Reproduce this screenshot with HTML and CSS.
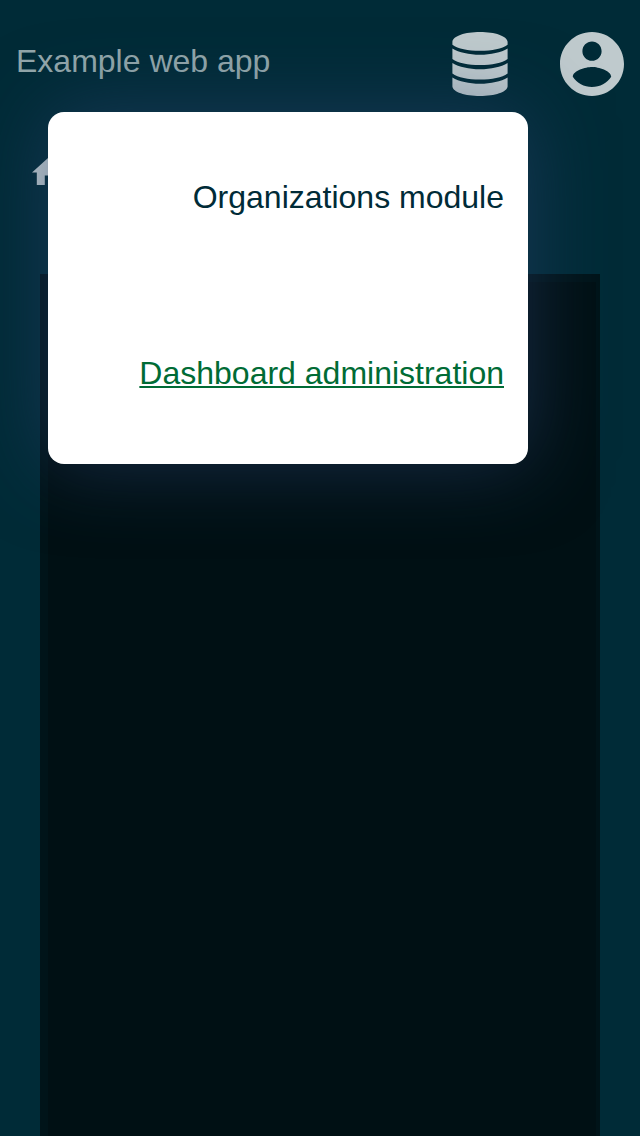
FILE: index.html
```html
<!DOCTYPE html>
<html lang="en">
<head>
<meta charset="utf-8">
<title>Example web app</title>
<link rel="stylesheet" href="styles.css">
</head>
<body>
<header class="bar">
  <span class="title">Example web app</span>
  <nav class="actions">
    <svg class="db" viewBox="0 0 56 64"><path d="M.4 9.700C1 4 13 0 28 0s27 4 27.600 9.700v3C50 16.800 40 18.800 28 18.800S6 16.800 .4 12.700zM.4 16.400C7 20.300 17 22.700 28 22.700s21-2.400 27.600-6.300v10.500C50 31 40 33 28 33S6 31 .4 26.900zM.4 30.900C7 34.800 17 37.200 28 37.200s21-2.400 27.600-6.300v10.500C50 45.500 40 47.500 28 47.500S6 45.500 .4 41.400zM.4 45.400C7 49.300 17 51.700 28 51.700s21-2.400 27.600-6.300v9.100C55 60 43 64 28 64S1 60 .4 54.500z"/></svg>
    <svg class="user" viewBox="2 2 20 20"><path d="M12 2C6.480 2 2 6.480 2 12s4.480 10 10 10 10-4.480 10-10S17.520 2 12 2zm0 3c1.660 0 3 1.340 3 3s-1.340 3-3 3-3-1.340-3-3 1.340-3 3-3zm0 14.200c-2.500 0-4.710-1.280-6-3.220.030-1.990 4-3.080 6-3.080 1.990 0 5.970 1.090 6 3.080-1.290 1.940-3.500 3.220-6 3.220z"/></svg>
  </nav>
</header>
<div class="crumbs">
  <svg class="home" viewBox="2 3 20 17"><path d="M10 20v-6h4v6h5v-8h3L12 3 2 12h3v8z"/></svg>
</div>
<main class="panel"></main>
<div class="menu">
  <span class="item">Organizations module</span>
  <a class="item link" href="#">Dashboard administration</a>
</div>
</body>
</html>
```
FILE: styles.css
```css
* { box-sizing: border-box; }
body {
  margin: 0;
  height: 1136px;
  display: flex;
  flex-direction: column;
  position: relative;
  overflow: hidden;
  background: #002b37;
  font: 32px/36px "Liberation Sans", Arial, sans-serif;
}
.bar {
  height: 128px;
  flex: none;
  display: flex;
  justify-content: space-between;
  align-items: flex-start;
  padding: 32px 16px;
}
.title { color: #93a7aa; padding-top: 11px; }
.actions { display: flex; gap: 52px; }
svg { display: block; fill: #bfcacd; }
.db { width: 56px; height: 64px; }
.user { width: 64px; height: 64px; }
.crumbs { height: 146px; flex: none; padding: 30.2px 32px; }
.home { width: 32px; height: 27.2px; fill: #bfcacd; }
.panel {
  flex: 1;
  margin: 0 40px;
  background: #001014;
  border: solid #001419;
  border-width: 8px 4px 0 8px;
}
.menu {
  position: absolute;
  left: 48px;
  top: 112px;
  width: 480px;
  height: 352px;
  padding: 0 24px;
  display: grid;
  grid-template-rows: 1fr 1fr;
  align-items: center;
  justify-items: end;
  background: #fff;
  border-radius: 16px;
  box-shadow: 0 0 80px rgba(43, 66, 110, .56);
}
.item { color: #002b37; padding-bottom: 6px; }
.link {
  color: #006b35;
  text-decoration: underline;
  text-decoration-thickness: 2px;
  text-underline-offset: 2px;
}
```
